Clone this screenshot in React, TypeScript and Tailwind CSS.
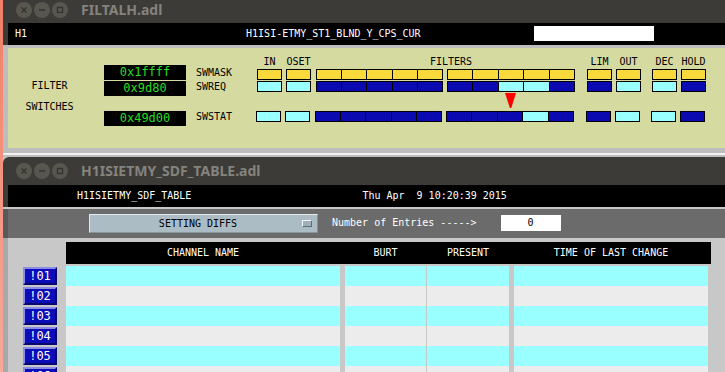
import React from "react";

const MONO = { fontFamily: '"DejaVu Sans Mono", "Liberation Mono", monospace' };
const SANS = { fontFamily: '"Noto Sans", "Open Sans", sans-serif' };

type Col = "Y" | "B" | "C";
const colCls: Record<Col, string> = {
  Y: "bg-[#fad93c]",
  B: "bg-[#0a0ab0]",
  C: "bg-[#99ffff]",
};

function Cell({ c, w }: { c: Col; w: string }) {
  return <div className={`${w} h-[11px] border border-black ${colCls[c]}`} />;
}

function Group({ cs, w }: { cs: Col[]; w: string }) {
  return (
    <div className={`${w} h-[11px] border border-black flex`}>
      {cs.map((c, i) => (
        <div
          key={i}
          className={`flex-1 h-full ${colCls[c]} ${i > 0 ? "border-l border-black" : ""}`}
        />
      ))}
    </div>
  );
}

function BlockRow({ r }: { r: Col[][] }) {
  return (
    <div className="flex items-start">
      <Cell c={r[0][0]} w="w-[25px]" />
      <div className="ml-[4px]">
        <Cell c={r[1][0]} w="w-[25px]" />
      </div>
      <div className="ml-[5px]">
        <Group cs={r[2]} w="w-[127px]" />
      </div>
      <div className="ml-[4px]">
        <Group cs={r[3]} w="w-[128px]" />
      </div>
      <div className="ml-[12px]">
        <Cell c={r[4][0]} w="w-[25px]" />
      </div>
      <div className="ml-[4px]">
        <Cell c={r[5][0]} w="w-[25px]" />
      </div>
      <div className="ml-[11px]">
        <Cell c={r[6][0]} w="w-[25px]" />
      </div>
      <div className="ml-[4px]">
        <Cell c={r[7][0]} w="w-[25px]" />
      </div>
    </div>
  );
}

const row1: Col[][] = [["Y"], ["Y"], ["Y", "Y", "Y", "Y", "Y"], ["Y", "Y", "Y", "Y", "Y"], ["Y"], ["Y"], ["Y"], ["Y"]];
const row2: Col[][] = [["C"], ["C"], ["B", "B", "B", "B", "B"], ["B", "B", "C", "C", "B"], ["B"], ["C"], ["C"], ["B"]];
const row3: Col[][] = [["C"], ["C"], ["B", "B", "B", "B", "B"], ["B", "B", "B", "C", "B"], ["B"], ["C"], ["C"], ["B"]];

function WinButtons() {
  return (
    <div className="flex gap-[2px]">
      <div className="w-[16px] h-[16px] rounded-full bg-[#57564f] flex items-center justify-center">
        <svg width="8" height="8" viewBox="0 0 8 8">
          <path d="M1.5 1.5 L6.5 6.5 M6.5 1.5 L1.5 6.5" stroke="#34332f" strokeWidth="1.4" />
        </svg>
      </div>
      <div className="w-[16px] h-[16px] rounded-full bg-[#57564f] flex items-center justify-center">
        <svg width="8" height="8" viewBox="0 0 8 8">
          <path d="M1 4 L7 4" stroke="#34332f" strokeWidth="1.5" />
        </svg>
      </div>
      <div className="w-[16px] h-[16px] rounded-full bg-[#57564f] flex items-center justify-center">
        <svg width="8" height="8" viewBox="0 0 8 8">
          <rect x="1.5" y="1.5" width="5" height="5" fill="none" stroke="#34332f" strokeWidth="1.3" />
        </svg>
      </div>
    </div>
  );
}

function HexBox({ v }: { v: string }) {
  return (
    <div
      className="w-[82px] h-[15px] bg-black text-[#22dd22] text-[12px] leading-[15px] text-center"
      style={MONO}
    >
      {v}
    </div>
  );
}

const rows = ["01", "02", "03", "04", "05", "06"];

export default function App() {
  return (
    <div className="w-[725px] h-[372px] overflow-hidden flex bg-[#c8c8c8]">
      <div className="w-[3px] h-full shrink-0 bg-gradient-to-b from-[#f17e68] to-[#f5aa9a]" />
      <div className="flex-1 flex flex-col overflow-hidden">
        {/* Top window */}
        <div className="h-[23px] shrink-0 bg-[#3c3b37] flex items-start pt-[2px] pl-[13px]">
          <WinButtons />
          <div className="ml-[13px] text-[14px] leading-[16px] font-bold text-[#85837d]" style={SANS}>
            FILTALH.adl
          </div>
        </div>
        <div className="shrink-0 bg-[#3c3b37] pl-[5px]">
          <div className="h-[22px] bg-black flex items-start pt-[5px] text-white text-[10px] leading-[12px]" style={MONO}>
            <span className="ml-[7px]">H1</span>
            <span className="ml-[219px]">H1ISI-ETMY_ST1_BLND_Y_CPS_CUR</span>
            <div className="ml-[113px] -mt-[2px] w-[120px] h-[15px] bg-white" />
          </div>
        </div>
        <div className="h-[3px] shrink-0 bg-[#bdbdbd]" />
        <div className="shrink-0 bg-[#bdbdbd] pl-[5px]">
          <div className="relative h-[100px] bg-[#d5daa1] flex text-black text-[10px] leading-[12px]" style={MONO}>
            <div className="w-[83px] flex flex-col items-center pt-[32px]">
              <div>FILTER</div>
              <div className="mt-[9px]">SWITCHES</div>
            </div>
            <div className="ml-[13px] flex flex-col pt-[8px]">
              <div className="h-[9px] flex">
                <div className="w-[153px]" />
                <div className="w-[25px] text-center">IN</div>
                <div className="ml-[4px] w-[25px] text-center">OSET</div>
                <div className="ml-[5px] w-[259px] pl-[11px] text-center">FILTERS</div>
                <div className="ml-[12px] w-[25px] text-center">LIM</div>
                <div className="ml-[4px] w-[25px] text-center">OUT</div>
                <div className="ml-[11px] w-[25px] text-center">DEC</div>
                <div className="ml-[4px] w-[25px] text-center">HOLD</div>
              </div>
              <div className="h-[14px] flex items-start">
                <HexBox v="0x1ffff" />
                <div className="ml-[10px] w-[61px] mt-[2px]">SWMASK</div>
                <div className="mt-[4px]">
                  <BlockRow r={row1} />
                </div>
              </div>
              <div className="mt-[2px] h-[15px] flex items-start">
                <HexBox v="0x9d80" />
                <div className="ml-[10px] w-[61px]">SWREQ</div>
                <BlockRow r={row2} />
              </div>
              <div className="mt-[15px] h-[15px] flex items-start">
                <HexBox v="0x49d00" />
                <div className="ml-[10px] w-[61px]">SWSTAT</div>
                <div className="-ml-[1px]">
                  <BlockRow r={row3} />
                </div>
              </div>
            </div>
            <svg className="absolute left-[497px] top-[45px]" width="11" height="15" viewBox="0 0 11 15">
              <polygon points="0,0 11,0 6.3,15 4.9,15" fill="#ff0000" />
            </svg>
          </div>
        </div>
        <div className="h-[5px] shrink-0 bg-[#bdbdbd]" />
        <div className="h-[2px] shrink-0 bg-[#f2f2f2]" />
        <div className="h-[2px] shrink-0 bg-[#bdbdbd]" />

        {/* Bottom window */}
        <div className="h-[28px] shrink-0 bg-[#3c3b37] rounded-tl-[6px] flex items-center pl-[13px]">
          <WinButtons />
          <div className="ml-[13px] text-[14px] leading-[16px] font-bold text-[#85837d]" style={SANS}>
            H1ISIETMY_SDF_TABLE.adl
          </div>
        </div>
        <div className="shrink-0 bg-[#3c3b37] pl-[5px]">
          <div className="h-[22px] bg-black flex items-start pt-[5px] text-white text-[10px] leading-[12px]" style={MONO}>
            <span className="ml-[69px]">H1ISIETMY_SDF_TABLE</span>
            <span className="ml-[171px]">Thu Apr&nbsp;&nbsp;9 10:20:39 2015</span>
          </div>
        </div>
        <div className="h-[2px] shrink-0 bg-[#c8c8c8]" />
        <div className="shrink-0 bg-[#595959] pl-[5px]">
          <div className="h-[29px] bg-[#6b6b6b] flex items-start text-[10px] leading-[12px]" style={MONO}>
            <div className="ml-[81px] mt-[5px] w-[229px] h-[19px] bg-[#abbcc4] border border-t-[#e4ebee] border-l-[#e4ebee] border-b-[#83949b] border-r-[#83949b] flex items-center">
              <div className="flex-1 text-center text-black pl-[4px]">SETTING DIFFS</div>
              <div className="mr-[5px] w-[10px] h-[7px] bg-[#9fb0b8] border border-t-[#f4f8fa] border-l-[#f4f8fa] border-b-[#5f6f76] border-r-[#5f6f76]" />
            </div>
            <div className="ml-[14px] mt-[8px] text-white">Number of Entries -----&gt;</div>
            <div className="ml-[24px] mt-[6px] w-[60px] h-[16px] bg-white text-black text-center leading-[16px]">0</div>
          </div>
        </div>
        <div className="flex-1 min-h-0 overflow-hidden bg-[#a9a9a9] pl-[5px]">
          <div className="h-full bg-[#c8c8c8] pt-[4px] text-[10px] leading-[12px]" style={MONO}>
            <div className="ml-[58px] w-[645px] h-[22px] bg-black text-white flex items-center">
              <div className="w-[274px] text-center">CHANNEL NAME</div>
              <div className="w-[5px]" />
              <div className="w-[81px] text-center">BURT</div>
              <div className="w-[1px]" />
              <div className="w-[82px] text-center">PRESENT</div>
              <div className="w-[5px]" />
              <div className="w-[194px] text-center">TIME OF LAST CHANGE</div>
            </div>
            <div className="mt-[2px] flex flex-col">
              {rows.map((n, i) => {
                const bg = i % 2 === 0 ? "bg-[#99ffff]" : "bg-[#ececec]";
                return (
                  <div key={n} className="h-[20px] shrink-0 flex">
                    <div className="w-[58px] pl-[15px] pt-[1px]">
                      <div className="w-[34px] h-[18px] bg-[#0c0cb8] border-2 border-t-[#8c8ce6] border-l-[#8c8ce6] border-b-[#07076e] border-r-[#07076e] text-white text-[12px] leading-[14px] text-center">
                        !{n}
                      </div>
                    </div>
                    <div className={`w-[274px] ${bg}`} />
                    <div className="w-[5px]" />
                    <div className={`w-[81px] ${bg}`} />
                    <div className="w-[1px]" />
                    <div className={`w-[82px] ${bg}`} />
                    <div className="w-[5px]" />
                    <div className={`w-[194px] ${bg}`} />
                  </div>
                );
              })}
            </div>
          </div>
        </div>
      </div>
    </div>
  );
}
